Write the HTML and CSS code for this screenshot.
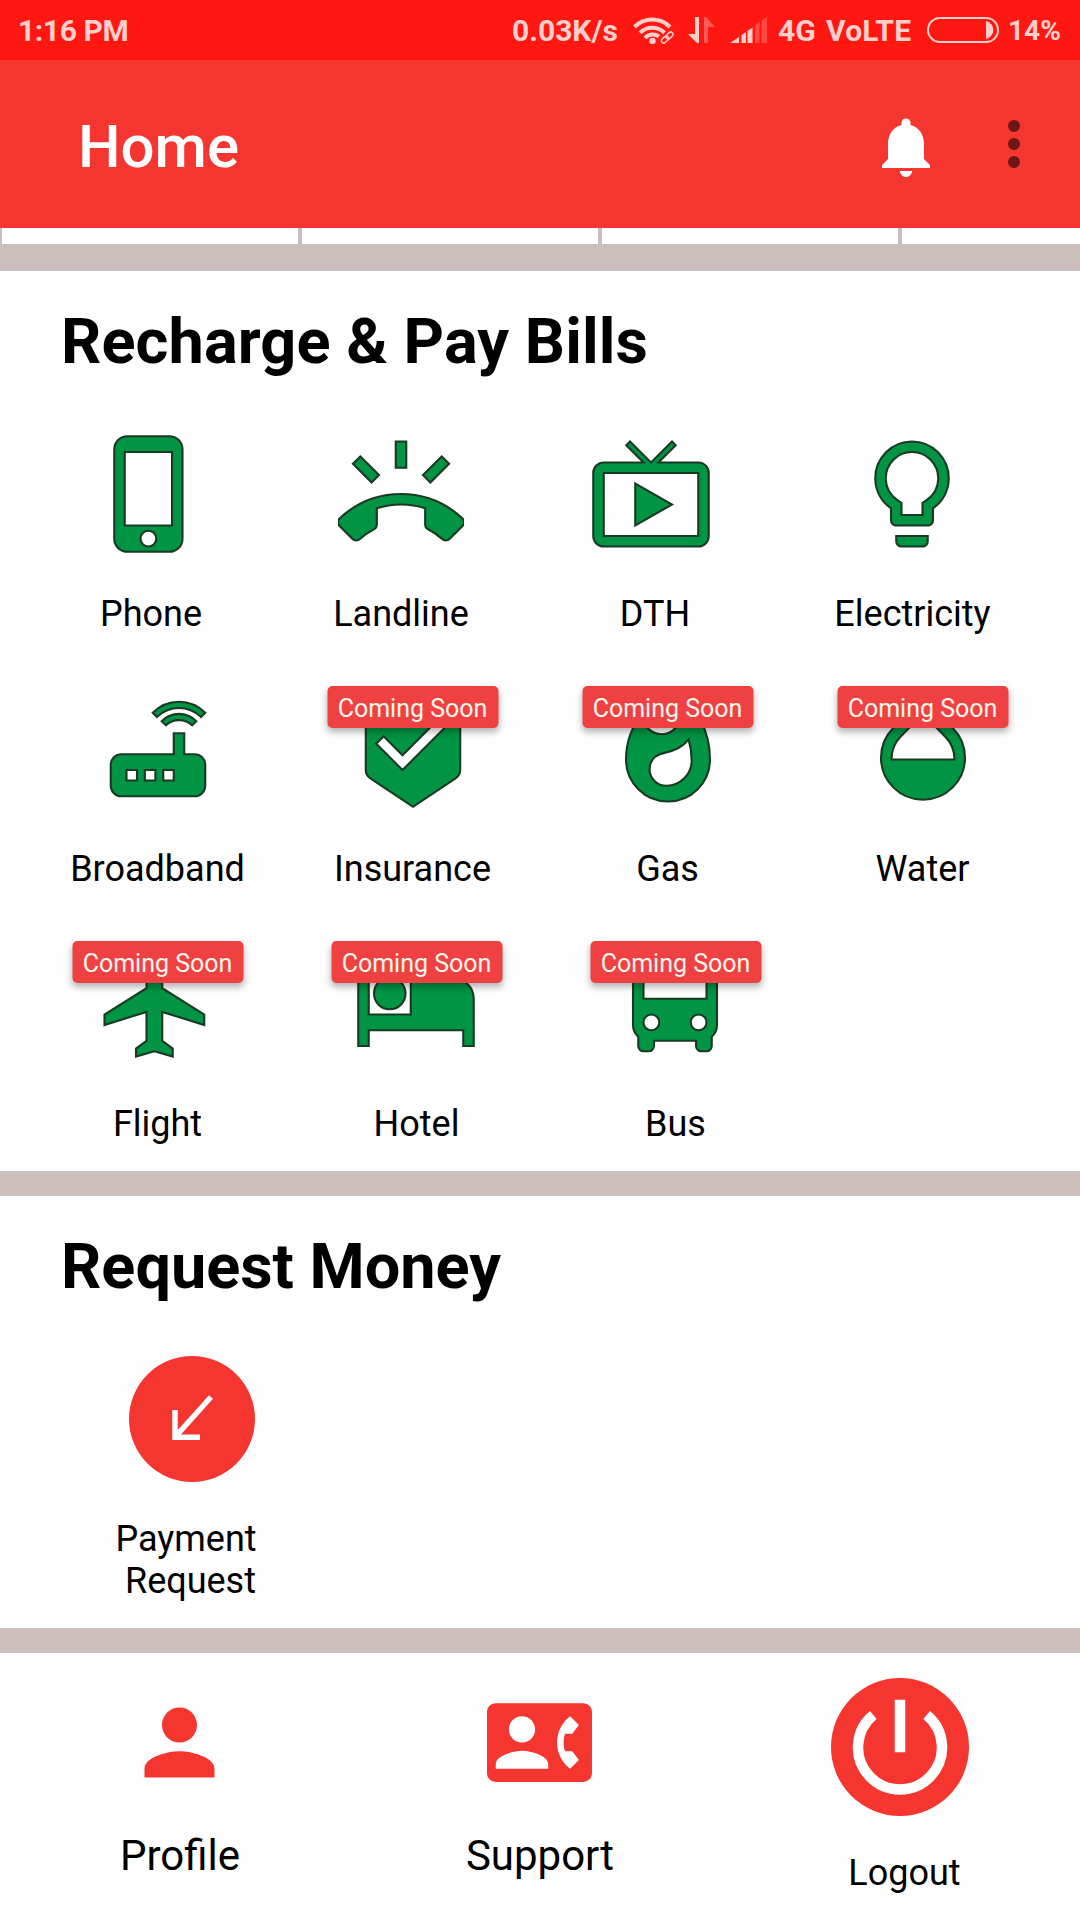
FILE: index.html
```html
<!DOCTYPE html>
<html lang="en">

<head>
    <meta charset="UTF-8">
    <meta name="viewport" content="width=device-width, initial-scale=1.0">
    <link rel="stylesheet" href="styles.css">
    <title>Home</title>
</head>

<body>

    <div class="statusbar">
        <span class="time">1:16 PM</span>
        <span class="speed">0.03K/s</span>
        <svg class="wifi" viewBox="0 0 42 28" width="42" height="28">
            <g fill="none" stroke="#ffcfcb" stroke-width="4">
                <path d="M1.5 11a25 25 0 0 1 35.5 0" />
                <path d="M7 16.8a17.5 17.5 0 0 1 24.5 0" />
                <path d="M12 22a10.500 10.500 0 0 1 14-1.500" />
            </g>
            <circle cx="19.5" cy="25" r="3.2" fill="#ffcfcb" />
            <g fill="none" stroke="#ffcfcb" stroke-width="1.5">
                <rect x="-4" y="-2.3" width="8" height="4.6" rx="2.3" transform="translate(36.5 19.5) rotate(-45)" />
                <rect x="-4" y="-2.3" width="8" height="4.6" rx="2.3" transform="translate(32 23.5) rotate(-45)" />
            </g>
        </svg>
        <svg class="arrows" viewBox="0 0 28 27" width="28" height="27">
            <path d="M7 0h4v26H9L0 17h7z" fill="#ffcfcb" />
            <path d="M16 26h4V10h7L18 0h-2z" fill="#ff5b54" />
        </svg>
        <svg class="signal" viewBox="0 0 38 26" width="38" height="26">
            <path d="M0 26l9-6v6zM11.5 18l4.5-3v11h-4.5zM17.5 14l5-3.500v15.500h-5z" fill="#ffcfcb" />
            <path d="M25 8l4.500-3v21H25zM31.500 3.500L37 0v26h-5.500z" fill="#ff4a44" />
        </svg>
        <span class="network">4G</span>
        <span class="volte">VoLTE</span>
        <svg class="battery" viewBox="0 0 72 26" width="72" height="26">
            <rect x="1" y="1" width="70" height="24" rx="12" fill="none" stroke="#ffcfcb" stroke-width="2" />
            <path d="M59 4a9.2 9.2 0 0 1 0 18z" fill="#ffcfcb" />
        </svg>
        <span class="percent">14%</span>
    </div>

    <div class="appbar">
        <h1>Home</h1>
        <svg class="bell" viewBox="0 0 24 24">
            <path d="M12 22c1.1 0 2-.9 2-2h-4c0 1.1.89 2 2 2zm6-6v-5c0-3.07-1.64-5.64-4.5-6.32V4c0-.83-.67-1.5-1.5-1.5s-1.5.67-1.5 1.5v.68C7.63 5.36 6 7.92 6 11v5l-2 2v1h16v-1l-2-2z" />
        </svg>
        <svg class="more" viewBox="0 0 24 24">
            <circle cx="12" cy="6" r="2" />
            <circle cx="12" cy="12" r="2" />
            <circle cx="12" cy="18" r="2" />
        </svg>
    </div>

    <!-- bottom edge of the scrolled grid -->
    <div class="strip">
        <div></div>
        <div></div>
        <div></div>
        <div></div>
    </div>
    <div class="divider first"></div>

    <div class="section">
        <h2 class="wide">Recharge &amp; Pay Bills</h2>
        <div class="services">
            <div class="row row1">
                <div class="item">
                    <svg class="icon" viewBox="0 0 24 24"><path d="M15.5 1h-8C6.12 1 5 2.12 5 3.5v17C5 21.88 6.12 23 7.5 23h8c1.38 0 2.5-1.12 2.5-2.5v-17C18 2.12 16.88 1 15.5 1zm-4 21c-.83 0-1.5-.67-1.5-1.5s.67-1.5 1.5-1.5 1.5.67 1.5 1.5-.67 1.5-1.5 1.5zm4.5-4H7V4h9v14z" /></svg>
                    <span>Phone</span>
                </div>
                <div class="item">
                    <svg class="icon" viewBox="0 0 24 24"><path d="M23.71 16.67C20.66 13.78 16.54 12 12 12 7.46 12 3.34 13.78.29 16.67c-.18.18-.29.43-.29.71 0 .28.11.53.29.71l2.48 2.48c.18.18.43.29.71.29.27 0 .52-.11.7-.28.79-.74 1.69-1.36 2.66-1.85.33-.16.56-.5.56-.9v-3.1c1.45-.48 3-.73 4.6-.73 1.6 0 3.15.25 4.6.72v3.1c0 .39.23.74.56.9.98.49 1.87 1.12 2.67 1.85.18.18.43.28.7.28.28 0 .53-.11.71-.29l2.48-2.48c.18-.18.29-.43.29-.71 0-.28-.12-.52-.3-.7zM21.16 6.26l-1.41-1.41-3.56 3.55 1.41 1.41zM13 2h-2v5h2V2zM6.4 9.81L7.81 8.4 4.26 4.84 2.84 6.26z" /></svg>
                    <span>Landline</span>
                </div>
                <div class="item dth">
                    <svg class="icon" viewBox="0 0 24 24"><path d="M21 6h-7.59l3.29-3.29L16 2l-4 4-4-4-.71.71L10.59 6H3c-1.1 0-2 .89-2 2v12c0 1.1.9 2 2 2h18c1.1 0 2-.9 2-2V8c0-1.11-.9-2-2-2zm0 14H3V8h18v12zM9 10v8l7-4z" /></svg>
                    <span>DTH</span>
                </div>
                <div class="item electricity">
                    <svg class="icon" viewBox="0 0 24 24"><path d="M9 21c0 .55.45 1 1 1h4c.55 0 1-.45 1-1v-1H9v1zm3-19C8.14 2 5 5.14 5 9c0 2.38 1.19 4.47 3 5.74V17c0 .55.45 1 1 1h6c.55 0 1-.45 1-1v-2.26c1.81-1.27 3-3.36 3-5.74 0-3.86-3.14-7-7-7zm2.85 11.1l-.85.6V16h-4v-2.3l-.85-.6C7.8 12.16 7 10.63 7 9c0-2.76 2.24-5 5-5s5 2.24 5 5c0 1.63-.8 3.16-2.15 4.1z" /></svg>
                    <span>Electricity</span>
                </div>
            </div>
            <div class="row row2">
                <div class="item">
                    <svg class="icon" viewBox="0 0 24 24"><path d="M20.2 5.9l.8-.8C19.6 3.7 17.8 3 16 3s-3.6.7-5 2.1l.8.8C13 4.8 14.5 4.2 16 4.2s3 .6 4.2 1.7zm-.9.8c-.9-.9-2.1-1.4-3.3-1.4s-2.4.5-3.3 1.4l.8.8c.7-.7 1.6-1 2.5-1 .9 0 1.8.3 2.5 1l.8-.8zM19 13h-2V9h-2v4H5c-1.1 0-2 .9-2 2v4c0 1.1.9 2 2 2h14c1.1 0 2-.9 2-2v-4c0-1.1-.9-2-2-2zM8 18H6v-2h2v2zm3.5 0h-2v-2h2v2zm3.5 0h-2v-2h2v2z" /></svg>
                    <span>Broadband</span>
                </div>
                <div class="item">
                    <div class="badge">Coming Soon</div>
                    <svg class="icon" viewBox="0 0 24 24"><path d="M19 1H5c-1.1 0-1.99.9-1.99 2L3 15.93c0 .69.35 1.3.88 1.66L12 23l8.11-5.41c.53-.36.88-.97.88-1.66L21 3c0-1.1-.9-2-2-2zm-9 15l-5-5 1.41-1.41L10 13.17l7.59-7.59L19 7l-9 9z" /></svg>
                    <span>Insurance</span>
                </div>
                <div class="item">
                    <div class="badge">Coming Soon</div>
                    <svg class="icon" viewBox="0 0 24 24"><path d="M13.5.67s.74 2.65.74 4.8c0 2.06-1.35 3.73-3.41 3.73-2.07 0-3.63-1.67-3.63-3.73l.03-.36C5.21 7.51 4 10.62 4 14c0 4.42 3.58 8 8 8s8-3.58 8-8C20 8.61 17.41 3.8 13.5.67zM11.71 19c-1.78 0-3.22-1.4-3.22-3.14 0-1.62 1.05-2.76 2.81-3.12 1.77-.36 3.6-1.21 4.62-2.58.39 1.29.59 2.65.59 4.04 0 2.65-2.15 4.8-4.8 4.8z" /></svg>
                    <span>Gas</span>
                </div>
                <div class="item">
                    <div class="badge">Coming Soon</div>
                    <svg class="icon" viewBox="0 0 24 24"><path d="M17.66 8L12 2.35 6.34 8C4.78 9.56 4 11.64 4 13.64s.78 4.11 2.34 5.67 3.61 2.35 5.66 2.35 4.1-.79 5.66-2.35S20 15.64 20 13.64 19.22 9.56 17.66 8zM6 14c.01-2 .62-3.27 1.76-4.4L12 5.27l4.24 4.38C17.38 10.77 17.99 12 18 14H6z" /></svg>
                    <span>Water</span>
                </div>
            </div>
            <div class="row row3">
                <div class="item">
                    <div class="badge">Coming Soon</div>
                    <svg class="icon" viewBox="0 0 24 24"><path d="M21 16v-2l-8-5V3.5c0-.83-.67-1.5-1.5-1.5S10 2.67 10 3.5V9l-8 5v2l8-2.5V19l-2 1.5V22l3.5-1 3.5 1v-1.5L13 19v-5.5l8 2.5z" /></svg>
                    <span>Flight</span>
                </div>
                <div class="item">
                    <div class="badge">Coming Soon</div>
                    <svg class="icon" viewBox="0 0 24 24"><path d="M7 13c1.66 0 3-1.34 3-3S8.66 7 7 7s-3 1.34-3 3 1.34 3 3 3zm12-6h-8v7H3V5H1v15h2v-3h18v3h2v-9c0-2.21-1.79-4-4-4z" /></svg>
                    <span>Hotel</span>
                </div>
                <div class="item">
                    <div class="badge">Coming Soon</div>
                    <svg class="icon" viewBox="0 0 24 24"><path d="M4 16c0 .88.39 1.67 1 2.22V20c0 .55.45 1 1 1h1c.55 0 1-.45 1-1v-1h8v1c0 .55.45 1 1 1h1c.55 0 1-.45 1-1v-1.78c.61-.55 1-1.34 1-2.22V6c0-3.5-3.58-4-8-4s-8 .5-8 4v10zm3.5 1c-.83 0-1.5-.67-1.5-1.5S6.67 14 7.5 14s1.5.67 1.5 1.5S8.33 17 7.5 17zm9 0c-.83 0-1.5-.67-1.5-1.5s.67-1.5 1.5-1.5 1.5.67 1.5 1.5-.67 1.5-1.5 1.5zm1.5-6H6V6h12v5z" /></svg>
                    <span>Bus</span>
                </div>
            </div>
        </div>
    </div>
    <div class="divider"></div>

    <div class="section">
        <h2>Request Money</h2>
        <div class="payment">
            <svg viewBox="0 0 126 126" width="126" height="126">
                <circle cx="63" cy="63" r="63" fill="#f5352f" />
                <path d="M46 54v27.2h25M46.5 80.5L82 41" fill="none" stroke="#fff" stroke-width="5.5" />
            </svg>
            <span>Payment<br>&nbsp;Request</span>
        </div>
    </div>
    <div class="divider"></div>

    <div class="footer">
        <div class="tab">
            <svg viewBox="0 0 24 24"><path d="M12 12c2.21 0 4-1.79 4-4s-1.79-4-4-4-4 1.79-4 4 1.79 4 4 4zm0 2c-2.67 0-8 1.34-8 4v2h16v-2c0-2.66-5.33-4-8-4z" /></svg>
            <span>Profile</span>
        </div>
        <div class="tab">
            <svg viewBox="0 0 24 24"><path d="M22 3H2C.9 3 0 3.9 0 5v14c0 1.1.9 2 2 2h20c1.1 0 1.99-.9 1.99-2L24 5c0-1.1-.9-2-2-2zM8 6c1.66 0 3 1.34 3 3s-1.34 3-3 3-3-1.34-3-3 1.34-3 3-3zm6 12H2v-1c0-2 4-3.1 6-3.1s6 1.1 6 3.1v1zm3.85-4h1.64L21 16l-1.99 1.99c-1.31-.98-2.28-2.38-2.73-3.99-.18-.64-.28-1.31-.28-2s.1-1.36.28-2c.45-1.62 1.42-3.01 2.73-3.99L21 8l-1.51 2h-1.64c-.22.63-.35 1.3-.35 2s.13 1.37.35 2z" /></svg>
            <span>Support</span>
        </div>
        <div class="tab logout">
            <svg viewBox="0 0 138 138">
                <circle cx="69" cy="69" r="69" />
                <path d="M69 21.7v52.6M42.3 37a42 42 0 1 0 53.4 0" fill="none" stroke="#fff" stroke-width="10.5" />
            </svg>
            <span>Logout</span>
        </div>
    </div>

</body>

</html>
```

FILE: styles.css
```css
* {
    padding: 0;
    margin: 0;
    box-sizing: border-box;
}

body {
    width: 1080px;
    height: 1920px;
    overflow: hidden;
    background-color: #fefefe;
    color: #000;
    font-family: Roboto, "Liberation Sans", sans-serif;
}

svg {
    display: block;
    flex-shrink: 0;
}

.statusbar {
    height: 60px;
    display: flex;
    align-items: center;
    background-color: #ff1812;
    color: #ffcfcb;
    font-size: 30px;
    font-weight: 700;
    line-height: 60px;
    padding-left: 18px;
    white-space: nowrap;
}

.statusbar span {
    padding-top: 1px;
}

.time {
    width: 494px;
    letter-spacing: -0.4px;
}

.speed {
    width: 121px;
}

.wifi {
    margin-right: 13px;
}

.arrows {
    margin-right: 14px;
}

.signal {
    margin-right: 10px;
}

.network {
    width: 48px;
}

.volte {
    width: 101px;
    letter-spacing: 0.2px;
}

.battery {
    margin-right: 9px;
}

.percent {
    font-size: 28px;
}

.appbar {
    height: 168px;
    display: flex;
    align-items: center;
    background-color: #f5352f;
    padding: 0 30px 0 78px;
}

.appbar h1 {
    flex: 1;
    color: white;
    font-size: 60px;
    font-weight: 500;
    line-height: 72px;
    padding-top: 6px;
}

.bell,
.more {
    width: 72px;
    height: 72px;
}

.bell {
    fill: white;
    margin-right: 36px;
    margin-top: 6px;
}

.more {
    fill: #6e1614;
}

.strip {
    height: 16px;
    display: grid;
    grid-template-columns: 296px 296px 296px 178px;
    column-gap: 4px;
    padding-left: 2px;
    background-color: #cbbdbf;
}

.strip div {
    background-color: white;
}

.divider {
    height: 25px;
    background-color: #cdbfbe;
}

.divider.first {
    height: 27px;
    background-color: #cbbfbd;
}

.section {
    padding: 35px 0 26px;
}

.section h2 {
    font-size: 63px;
    font-weight: 700;
    line-height: 72px;
    padding-left: 61px;
    margin-bottom: 53px;
}

.section .wide {
    letter-spacing: 0.1px;
}

.services {
    display: flex;
    flex-direction: column;
    gap: 51px;
}

.row {
    display: grid;
}

.row1 {
    grid-template-columns: 250px 250px 258px 257px;
    padding-left: 26px;
}

.row2 {
    grid-template-columns: repeat(4, 255px);
    padding-left: 30px;
}

.row3 {
    grid-template-columns: repeat(3, 259px);
    padding-left: 28px;
}

.item {
    position: relative;
    display: flex;
    flex-direction: column;
    align-items: center;
    font-size: 36px;
    line-height: 42px;
}

.icon {
    width: 126px;
    height: 126px;
    margin-bottom: 36px;
    fill: #009444;
    stroke: #193a22;
    stroke-width: 0.4;
}

.row3 .icon,
.electricity .icon {
    margin-right: 2px;
}

.dth .icon {
    margin-right: 8px;
}

.badge {
    position: absolute;
    top: 0;
    left: 50%;
    transform: translateX(-50%);
    width: 171px;
    height: 42px;
    padding-top: 3px;
    border-radius: 5px;
    background-color: #f04142;
    color: #fff6ec;
    font-size: 25px;
    line-height: 39px;
    text-align: center;
    white-space: nowrap;
    box-shadow: 0 4px 7px rgba(0, 0, 0, 0.3);
}

.payment {
    width: 250px;
    margin-left: 61px;
    display: flex;
    flex-direction: column;
    align-items: center;
    font-size: 36px;
    line-height: 42px;
    text-align: center;
}

.payment svg {
    margin-left: 12px;
    margin-bottom: 36px;
}

.footer {
    display: grid;
    grid-template-columns: repeat(3, 360px);
}

.tab {
    padding-top: 37px;
    display: flex;
    flex-direction: column;
    align-items: center;
    font-size: 42px;
    line-height: 50px;
}

.tab svg {
    width: 105px;
    height: 105px;
    margin-right: 1px;
    margin-bottom: 36px;
    fill: #f5352f;
}

.logout {
    padding-top: 25px;
    font-size: 36px;
    line-height: 42px;
}

.logout svg {
    width: 138px;
    height: 138px;
    margin-right: 0;
}

.logout span {
    padding-left: 9px;
}
```
